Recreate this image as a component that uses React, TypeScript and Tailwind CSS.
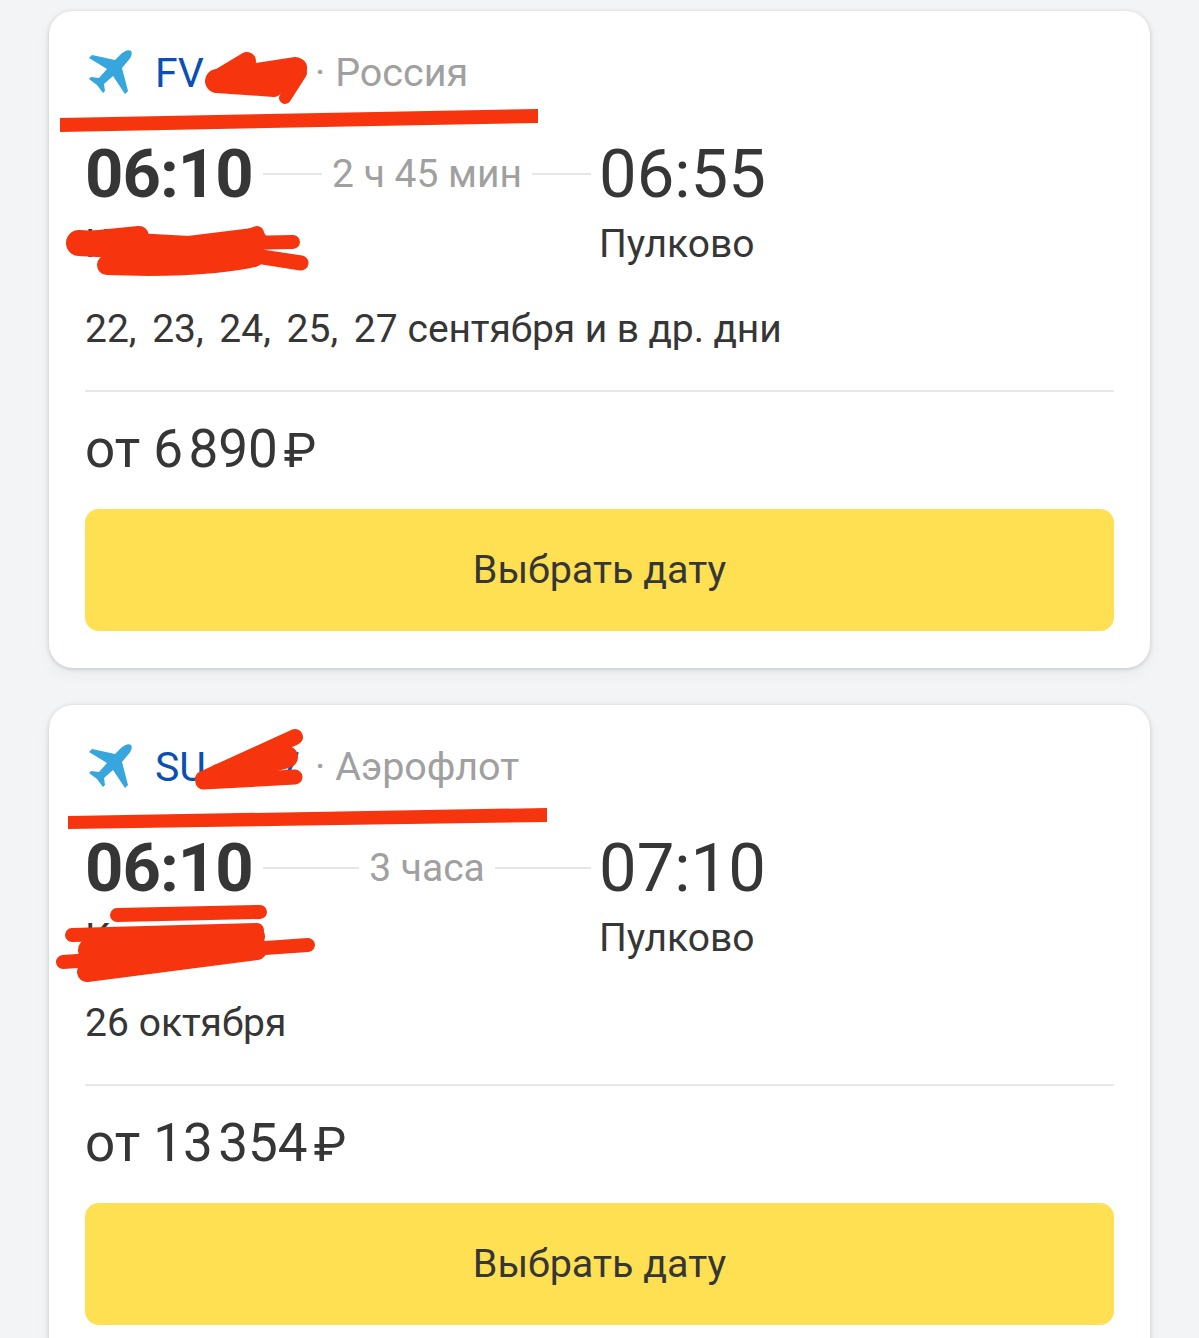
/**
 * Two flight result cards with red marker scribbles drawn over the flight
 * numbers and departure airports.
 */

type Stroke = [d: string, width: number]

interface Flight {
  code: string
  codeTail?: string
  carrier: string
  departure: string
  arrival: string
  duration: string
  days: string
  dates: string
  price: string
  underline: string
  strokes: Stroke[]
}

const flights: Flight[] = [
  {
    code: 'FV',
    carrier: 'Россия',
    departure: '06:10',
    arrival: '06:55',
    duration: '2 ч 45 мин',
    days: '22, 23, 24, 25, 27',
    dates: 'сентября и в др. дни',
    price: '6\u200a890',
    underline: 'M11 107 L489 98 L489 112 L11 121 Z',
    strokes: [
      ['M168 68 L198 50', 18],
      ['M168 70 L246 58', 24],
      ['M168 74 L225 78 L250 56', 16],
      ['M236 87 L252 62', 12],
      ['M30 231 L90 225', 20],
      ['M30 232 L140 238 L205 230', 26],
      ['M180 232 L208 222', 14],
      ['M190 232 L244 231', 14],
      ['M58 254 L100 255 C150 255 190 250 205 246', 20],
      ['M200 244 L252 252', 15],
    ],
  },
  {
    code: 'SU',
    codeTail: '7',
    carrier: 'Аэрофлот',
    departure: '06:10',
    arrival: '07:10',
    duration: '3 часа',
    days: '26',
    dates: 'октября',
    price: '13\u200a354',
    underline: 'M19 111 L498 103 L498 117 L19 124 Z',
    strokes: [
      ['M154 74 L246 32', 16],
      ['M154 77 L246 72', 15],
      ['M170 70 L238 52', 22],
      ['M68 210 L211 207', 14],
      ['M23 230 L208 225', 14],
      ['M14 257 L259 240', 14],
      ['M38 267 L208 245', 20],
      ['M41 245 L204 232', 24],
    ],
  },
]

function PlaneIcon() {
  return (
    <svg viewBox="0 0 44 44" className="ml-[3px] h-[44px] w-[44px] shrink-0" fill="#36a6dc">
      <path d="M43 1 C41 -1 36 1 32 5 L27 10 L4 5 L1 8 L19 19 L11 28 L3 27 L1 29 L9 35 L15 43 L17 41 L16 34 L25 26 L37 44 L40 41 L34 18 L39 12 C43 8 45 3 43 1Z" />
    </svg>
  )
}

function FlightCard({ flight }: { flight: Flight }) {
  return (
    <div className="relative h-[657px] w-[1101px] shrink-0 overflow-hidden rounded-[24px] bg-white px-[36px] shadow-[0_1px_4px_rgba(90,100,120,0.3),0_6px_14px_rgba(90,100,120,0.06)]">
      <div className="flex h-[124px] items-center pb-[2px]">
        <PlaneIcon />
        <span className="ml-[23px] mt-[2px] flex w-[160px] items-center pr-[15px] text-[41px] leading-none text-[#0b4fb5]">
          <span className="flex-1">{flight.code}</span>
          {flight.codeTail}
        </span>
        <span className="mt-[2px] text-[39.5px] leading-none text-[#a0a0a0]">· {flight.carrier}</span>
      </div>
      <div className="flex h-[78px] items-center">
        <span className="w-[168px] text-[67px] font-bold leading-none tracking-[-1px] text-[#363636]">{flight.departure}</span>
        <div className="ml-[10px] flex w-[328px] items-center gap-[10px]">
          <div className="h-[2px] flex-1 bg-[#e6e6e6]" />
          <span className="text-[39px] leading-none text-[#a0a0a0]">{flight.duration}</span>
          <div className="h-[2px] flex-1 bg-[#e6e6e6]" />
        </div>
        <span className="ml-[8px] text-[67px] leading-none text-[#363636]">{flight.arrival}</span>
      </div>
      <div className="flex h-[62px] items-center text-[39px] leading-none text-[#363636]">
        <span className="w-[514px]">К</span>
        <span>Пулково</span>
      </div>
      <div className="flex h-[117px] items-center gap-[10px] border-b-2 border-[#e8e8e8] pb-[7px] text-[39px] leading-none text-[#363636]">
        <span className="[word-spacing:6px]">{flight.days}</span>
        <span className="tracking-[-0.1px]">{flight.dates}</span>
      </div>
      <div className="flex h-[117px] items-center pb-[3px] text-[53px] leading-none text-[#363636]">
        <span>от {flight.price}</span>
        <span className="ml-[6px] mt-[2px] text-[49px]">₽</span>
      </div>
      <button className="flex h-[122px] w-full items-center justify-center rounded-[14px] bg-[#ffe052] text-[39.5px] text-[#363636]">
        Выбрать дату
      </button>
      <svg viewBox="0 0 1101 300" className="absolute left-0 top-0 h-[300px] w-[1101px]">
        <path d={flight.underline} fill="#f6350f" />
        {flight.strokes.map(([d, width]) => (
          <path key={d} d={d} fill="none" stroke="#f6350f" strokeWidth={width} strokeLinecap="round" strokeLinejoin="round" />
        ))}
      </svg>
    </div>
  )
}

export default function App() {
  return (
    <div className="flex h-[1338px] w-[1199px] flex-col items-center gap-[37px] overflow-hidden bg-[#f3f4f5] pt-[11px] font-['Roboto',sans-serif]">
      {flights.map((f) => (
        <FlightCard key={f.code} flight={f} />
      ))}
    </div>
  )
}
